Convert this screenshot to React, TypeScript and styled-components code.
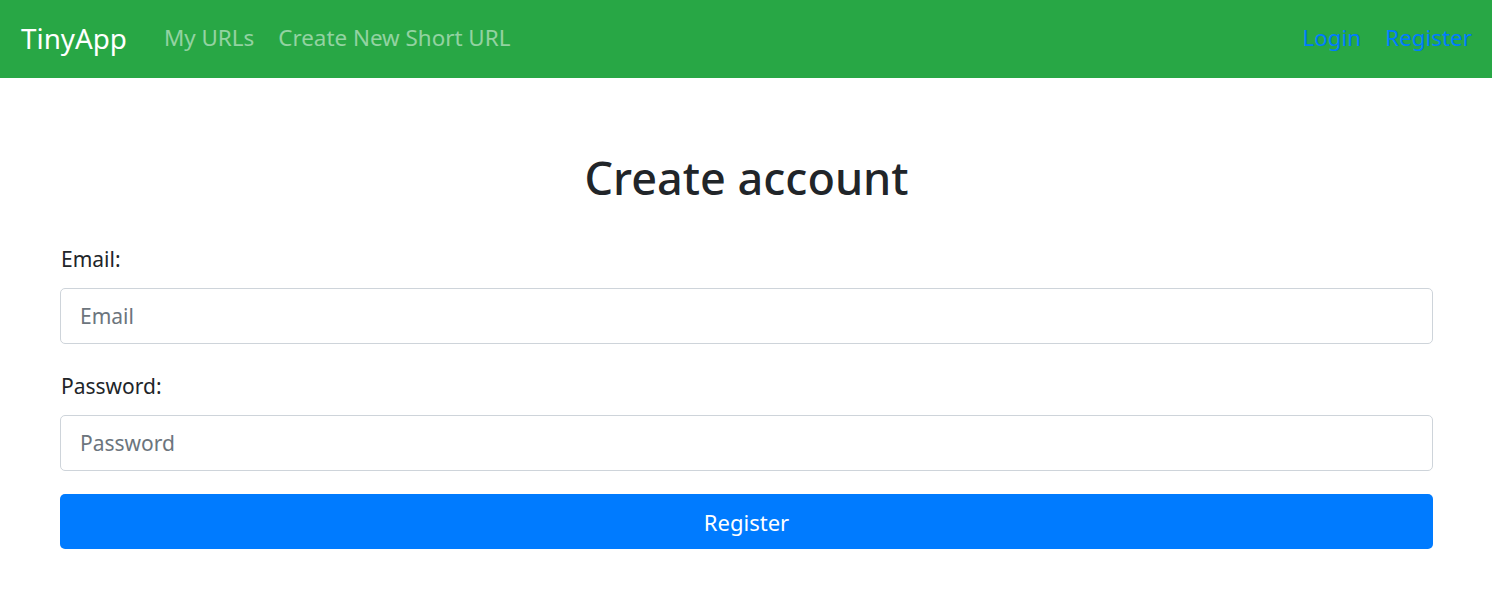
import React from "react";
import styled, { createGlobalStyle } from "styled-components";

const Global = createGlobalStyle`
  html, body { margin: 0; padding: 0; background: #fff; }
  body { font-family: "Noto Sans", "Open Sans", sans-serif; color: #212529; }
  * { box-sizing: border-box; }
`;

const NavBar = styled.nav`
  height: 78px;
  background: #28a745;
  display: flex;
  align-items: center;
  padding: 0 20px 3px 21px;
`;

const Brand = styled.a`
  font-size: 27.8px;
  color: #fff;
  text-decoration: none;
  margin-right: 37px;
`;

const NavGroup = styled.div<{ $right?: boolean }>`
  display: flex;
  align-items: center;
  gap: 24px;
  margin-left: ${(p) => (p.$right ? "auto" : "0")};
`;

const NavLink = styled.a<{ $blue?: boolean }>`
  font-size: 22.4px;
  color: ${(p) => (p.$blue ? "#007bff" : "rgba(255,255,255,0.5)")};
  text-decoration: none;
`;

const Main = styled.main`
  padding: 0 59px 0 60px;
`;

const Title = styled.h1`
  margin: 72px 0 38px;
  font-size: 45px;
  font-weight: 500;
  text-align: center;
  line-height: 56px;
`;

const Form = styled.form`
  display: flex;
  flex-direction: column;
`;

const Label = styled.label`
  font-size: 21px;
  line-height: 30px;
  margin: 0 1px 14px;
`;

const Input = styled.input`
  height: 56px;
  width: 100%;
  border: 1px solid #ced4da;
  border-radius: 5px;
  padding: 0 19px;
  font-family: inherit;
  font-size: 21px;
  color: #495057;
  margin-bottom: 27px;
  &::placeholder { color: #6c757d; opacity: 1; }
`;

const Button = styled.button`
  height: 55px;
  margin-top: -4px;
  width: 100%;
  background: #007bff;
  color: #fff;
  border: none;
  border-radius: 5px;
  font-family: inherit;
  font-size: 22px;
  cursor: pointer;
`;

export default function App() {
  return (
    <>
      <Global />
      <NavBar>
        <Brand href="#">TinyApp</Brand>
        <NavGroup>
          <NavLink href="#">My URLs</NavLink>
          <NavLink href="#">Create New Short URL</NavLink>
        </NavGroup>
        <NavGroup $right>
          <NavLink $blue href="#">Login</NavLink>
          <NavLink $blue href="#">Register</NavLink>
        </NavGroup>
      </NavBar>
      <Main>
        <Title>Create account</Title>
        <Form onSubmit={(e) => e.preventDefault()}>
          <Label htmlFor="email">Email:</Label>
          <Input id="email" type="email" placeholder="Email" />
          <Label htmlFor="password">Password:</Label>
          <Input id="password" type="password" placeholder="Password" />
          <Button type="submit">Register</Button>
        </Form>
      </Main>
    </>
  );
}
